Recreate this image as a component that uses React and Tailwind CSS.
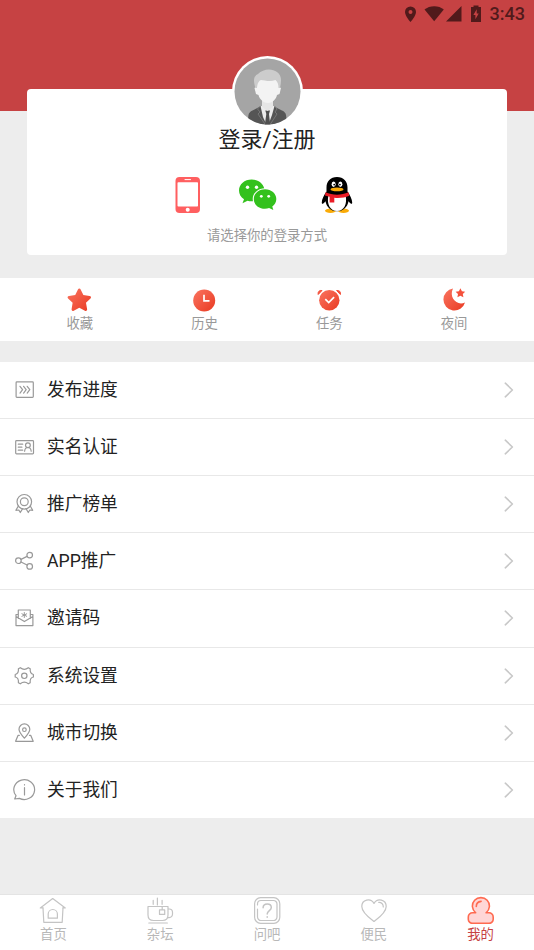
const line = {
  fill: 'none',
  stroke: 'currentColor',
  strokeWidth: 1.2,
  strokeLinecap: 'round',
  strokeLinejoin: 'round',
}

const menu = [
  {
    label: '发布进度',
    icon: (
      <>
        <rect x="4.1" y="3.9" width="17.2" height="15.4" rx="0.8" />
        <path d="M8 8.300l2.600 3.400L8 15.100M11.600 8.300l2.600 3.400-2.600 3.400M15.200 8.300l2.600 3.400-2.600 3.400" />
      </>
    ),
  },
  {
    label: '实名认证',
    icon: (
      <>
        <rect x="3.7" y="5.6" width="17.800" height="13.200" rx="0.8" />
        <path d="M6.300 9.200h4.400M6.300 12.200h3.600M6.300 15.200h4.400M12.600 16.200c.2-2.200 1.500-3.700 3.300-3.700s3.100 1.500 3.300 3.700" />
        <circle cx="15.900" cy="10.200" r="2.400" />
      </>
    ),
  },
  {
    label: '推广榜单',
    icon: (
      <>
        <circle cx="12.300" cy="9.800" r="7.300" />
        <circle cx="12.300" cy="9.800" r="3.900" />
        <path d="M6.200 14.300l-2.300 4 2.900-.3 1.500 2.500 2.300-3.900M18.400 14.300l2.300 4-2.900-.3-1.500 2.500-2.300-3.900" />
      </>
    ),
  },
  {
    label: 'APP推广',
    icon: (
      <>
        <circle cx="6.400" cy="11.700" r="2.800" />
        <circle cx="17.700" cy="6.100" r="2.800" />
        <circle cx="17.700" cy="17.400" r="2.800" />
        <path d="M9 10.400l6.100-3M9 13l6.100 3" />
      </>
    ),
  },
  {
    label: '邀请码',
    icon: (
      <>
        <path d="M6.300 12.500V4h12v8.500M6.300 8.500H4v11.100h16.900V8.500h-2.600M4 10.600l8.400 5 8.500-5" />
        <path d="M12.300 6.500v5M9.900 7.800l4.800 2.500M14.700 7.800l-4.800 2.500" strokeWidth="1" />
      </>
    ),
  },
  {
    label: '系统设置',
    icon: (
      <>
        <path d="M8.300 3.700Q12.300 6.900 16.300 3.700L18.200 4.800Q17.700 9.700 21.400 10.500V13Q17.700 13.800 18.200 18.700L16.300 19.800Q12.300 16.600 8.300 19.800L6.400 18.700Q6.900 13.800 3.200 13V10.500Q6.900 9.700 6.400 4.800Z" />
        <circle cx="12.300" cy="11.800" r="2.700" />
      </>
    ),
  },
  {
    label: '城市切换',
    icon: (
      <>
        <path d="M12.400 17.200C9.300 13.800 7 11.300 7 8.300a5.400 5.400 0 0110.800 0c0 3-2.300 5.500-5.400 8.900z" />
        <circle cx="12.400" cy="8.700" r="1.800" />
        <path d="M7.300 14.400H6L3.600 20.300h17.600l-2.400-5.900h-1.300" />
      </>
    ),
  },
  {
    label: '关于我们',
    icon: (
      <>
        <path d="M4 17.700A10.400 9.900 0 117.400 20.400L2.700 21Z" />
        <path d="M12.500 9.700v7.200M12.500 6.700v.3" />
      </>
    ),
  },
]

const starPath =
  'M12.300 1.500c.6 0 .9.300 1.200.9l2.400 5 5.500.8c1.300.2 1.700 1.300.8 2.200l-4 3.900 1 5.500c.2 1.300-.7 2-1.900 1.400l-5-2.600-4.900 2.600c-1.200.6-2.100-.1-1.900-1.400l.9-5.500-4-3.900c-.9-.9-.5-2 .8-2.200l5.500-.8 2.400-5c.3-.6.7-.9 1.200-.9z'

const shortcuts = [
  { label: '收藏', icon: <path d={starPath} transform="translate(-1.600 -.3) scale(1.130)" fill="url(#coral)" /> },
  {
    label: '历史',
    icon: (
      <>
        <circle cx="12.200" cy="13.500" r="11" fill="url(#coral)" />
        <path d="M12 7.800v6h5.500" fill="none" stroke="#fff" strokeWidth="1.700" />
      </>
    ),
  },
  {
    label: '任务',
    icon: (
      <>
        <path d="M1.200 7.500C.5 5 2.200 3 5 3.500zM23.400 7.500C24.100 5 22.400 3 19.600 3.500z" fill="#f4513c" stroke="#f4513c" strokeLinejoin="round" />
        <circle cx="12.300" cy="13.300" r="10.200" fill="url(#coral)" />
        <path d="M8.300 12.200l3.400 3.300 5.400-5.400" fill="none" stroke="#fff" strokeWidth="1.700" />
      </>
    ),
  },
  {
    label: '夜间',
    icon: (
      <>
        <path d="M11 1.600A11 11 0 1023 15.500C15 19.500 6.500 10.500 11 1.600z" fill="url(#coral)" />
        <path
          d="M18.700 1l1.500 2.900 3.300.5-2.400 2.300.6 3.300-3-1.600-3 1.600.6-3.300-2.400-2.300 3.300-.5z"
          transform="translate(-.3 .3)"
          fill="#f4513c"
        />
      </>
    ),
  },
]

const tabs = [
  {
    label: '首页',
    icon: (
      <>
        <path d="M4.200 11.900H1.300L13.700 2.600l12.600 9.300h-2.600M4 12l.8 14.300h18.400L24 12" />
        <path d="M9.200 22.200v-4.100a4.600 4.600 0 019.200 0v4.100z" />
      </>
    ),
  },
  {
    label: '杂坛',
    icon: (
      <>
        <path d="M7.200 4.300v4M11.400 2v7M16.100 4.300v4M2.800 27h18.600" />
        <path d="M2 10.500h20v8.500q0 5.500-5.500 5.500h-9Q2 24.500 2 19zM22 13h1.200a3.300 3.300 0 013.300 3.300v2a3.300 3.300 0 01-3.300 3.300h-1.700" />
        <path d="M16.200 10.500v3.300M13.500 13.900h5.200v4.500h-5.200z" />
      </>
    ),
  },
  {
    label: '问吧',
    icon: (
      <>
        <rect x="1.600" y="1.700" width="25.200" height="25.600" rx="6" />
        <path d="M4.500 9V8a3.500 3.500 0 013.500-3.500h12.500A3.500 3.500 0 0124 8v13a3.500 3.500 0 01-3.500 3.500H8A3.500 3.500 0 014.500 21v-8" />
        <path d="M10.100 11.800c0-2.400 1.700-3.900 4.200-3.900 2.300 0 4 1.400 4 3.600 0 3.200-4.100 3-4.100 6.500M14.200 20.700v.6" strokeWidth="1.500" />
      </>
    ),
  },
  {
    label: '便民',
    icon: (
      <>
        <path d="M14 25.500C9.500 22 1.800 16.500 1.800 10.400c0-6.900 8.800-9 12.200-3 3.400-6 12.200-3.900 12.200 3 0 6.100-7.700 11.600-12.200 15.100z" />
        <path d="M18.700 6.300c2.700-.2 4.600 1.800 4.600 4.600" />
      </>
    ),
  },
  {
    label: '我的',
    active: true,
    icon: (
      <>
        <path
          d="M8.700 16.800a8.500 8.500 0 1110.400 0H22a4.200 4.200 0 014.200 4.200v2.200a4.200 4.200 0 01-4.200 4.200H5.500a4.200 4.200 0 01-4.200-4.200V21a4.200 4.200 0 014.200-4.200z"
          fill="#ffd6d6"
          strokeWidth="1.600"
        />
        <path d="M9.300 10.500c0-3 1.800-4.800 4.800-5.100" strokeWidth="1.600" />
      </>
    ),
  },
]

function StatusBar() {
  return (
    <div className="flex items-center justify-end pr-[9px] h-[27px] text-[#511a1b]">
      <svg width="80" height="20" viewBox="0 0 80 20" fill="currentColor">
        <path fillRule="evenodd" d="M6.500 2.500a5.500 5.500 0 00-5.500 5.500c0 4 5.500 10 5.500 10s5.500-6 5.500-10a5.500 5.500 0 00-5.500-5.500zm0 3.500a2 2 0 110 4 2 2 0 010-4z" />
        <path d="M20.500 5.500C25.500 1 35 1 39.800 5.500L30.200 17.200z" />
        <path d="M57.500 2v15.500H42z" />
        <path fillRule="evenodd" d="M69.500 1.500h5V3H77v15H67V3h2.500zM72.700 5.300L69.400 11h2v4.300l3.300-5.800h-2z" />
      </svg>
      <span className="ml-[6px] text-[18px] font-medium leading-none">3:43</span>
    </div>
  )
}

function Avatar() {
  return (
    <svg className="block -mt-[33.500px]" width="71" height="71" viewBox="0 0 71 71">
      <defs>
        <clipPath id="face">
          <circle cx="35.500" cy="35.500" r="33" />
        </clipPath>
      </defs>
      <circle cx="35.500" cy="35.500" r="35.500" fill="#fff" />
      <g clipPath="url(#face)">
        <rect width="71" height="71" fill="#a5a5a5" />
        <path d="M15 71l1.500-12q.5-3 4-4.500L29 50h12l9 4.500q3.500 1.500 4 4.500L55.500 71z" fill="#555" />
        <path d="M28.500 50h14l-2.500 9-4.500 12L31 61z" fill="#ececec" />
        <path d="M33.300 54.500h4.700l-1 3.500 1.500 13h-6l1.800-13z" fill="#505050" />
        <path d="M28.500 50l-3 3 2.500 3-2 2 9 13M42.500 50l2.500 3-2 3 2 2-8.500 13" fill="none" stroke="#777" />
        <path d="M30 42h11v8.500L35.500 55 30 50.500z" fill="#e6e6e6" />
        <path d="M24 23h23v8l2 1-1.500 6-2.500 1c-1 4.500-5 8-9 8s-8.500-3.500-9.500-8L24 38l-1.500-6L24 31z" fill="#f3f3f3" />
        <path d="M23.500 32c-2.500-7-2-12 2.500-14 5-5.500 14-6 19-2 5 3.500 4.500 9 3 16h-1.500c0-4-1-6-3-8-5 2-11 .5-14.500 0-3 1.500-3.500 4-4 8z" fill="#ccc" />
      </g>
    </svg>
  )
}

function LoginIcons() {
  return (
    <div className="flex justify-center items-center mt-[20px] h-[44px] pr-[7px]">
      <svg width="26" height="38" viewBox="0 0 26 38">
        <rect x=".5" y="1" width="24.500" height="36" rx="4" fill="#ff5f60" />
        <rect x="2.500" y="6.300" width="20.500" height="24.200" rx=".8" fill="#fff" />
        <path d="M10 3.600h5.500" stroke="#fff" strokeWidth="1" strokeLinecap="round" />
        <circle cx="12.700" cy="33.700" r="2" fill="#fff" />
      </svg>
      <svg className="ml-[37px]" width="40" height="34" viewBox="0 0 40 34">
        <path d="M13.700 1.500C6.500 1.500 1 6.300 1 12.500c0 3.600 1.800 6.700 5 8.700l-1.500 4 5-2.500c1.300.4 2.700.6 4.200.6 7.100 0 12.800-4.500 12.800-10.800S20.800 1.500 13.700 1.500z" fill="#33c11d" />
        <ellipse cx="27" cy="21" rx="12.300" ry="10.700" fill="#fff" />
        <path d="M27 11.200c6.400 0 11.300 4.400 11.300 9.800 0 3-1.500 5.700-4 7.500l1 3.500-4.200-2c-1.300.5-2.600.8-4.100.8-6.300 0-11.200-4.300-11.200-9.800s4.900-9.800 11.200-9.800z" fill="#33c11d" />
        <g fill="#fff">
          <circle cx="9.500" cy="9.200" r="1.700" />
          <circle cx="18.500" cy="9.200" r="1.700" />
          <circle cx="23.300" cy="18.300" r="1.400" />
          <circle cx="30.700" cy="18.300" r="1.400" />
        </g>
      </svg>
      <svg className="ml-[43px]" width="32" height="38" viewBox="0 0 32 38">
        <ellipse cx="9.500" cy="34.800" rx="5.500" ry="2.200" fill="#faab07" />
        <ellipse cx="22.500" cy="34.800" rx="5.500" ry="2.200" fill="#faab07" />
        <path d="M16 1C9.500 1 5.500 5.500 5.500 11.500v4C3 19 .7 23.500.8 26.500c0 2 1 2 3.700-1.300 1 5.500 5 10 11.500 10s10.500-4.500 11.500-10c2.700 3.300 3.700 3.300 3.700 1.300 0-3-2.200-7.500-4.700-11v-4C26.500 5.500 22.500 1 16 1z" fill="#000" />
        <path d="M7.300 20c-1.500 8 1.500 15 8.700 15s10.200-7 8.700-15z" fill="#fff" />
        <path d="M4.500 16.300c7 3.300 16 3.300 23 0l.8 3.500c-4.500 2-10 2.500-15 2v4.800H8.600v-5.800L4 19.500z" fill="#eb1c26" />
        <ellipse cx="12.600" cy="8.300" rx="2" ry="2.700" fill="#fff" />
        <ellipse cx="19.400" cy="8.300" rx="2" ry="2.700" fill="#fff" />
        <circle cx="13.200" cy="8.600" r=".9" />
        <circle cx="18.900" cy="8.600" r=".9" />
        <ellipse cx="16" cy="13.400" rx="6.500" ry="1.900" fill="#faab07" />
      </svg>
    </div>
  )
}

export default function App() {
  return (
    <div className="flex flex-col h-[950px] w-full overflow-hidden bg-[#ededed] font-[Roboto,'Noto_Sans_CJK_SC',sans-serif]">
      <svg className="absolute" width="0" height="0">
        <defs>
          <linearGradient id="coral" x1="0" y1="0" x2="1" y2="1">
            <stop offset="0" stopColor="#fa7460" />
            <stop offset="1" stopColor="#e93a22" />
          </linearGradient>
        </defs>
      </svg>

      <header className="h-[111px] shrink-0 bg-[#c64243]">
        <StatusBar />
      </header>

      <section className="relative -mt-[22px] mx-[27px] h-[166px] shrink-0 rounded bg-white flex flex-col items-center">
        <Avatar />
        <h1 className="text-[22px] leading-[26px] text-[#222]">登录/注册</h1>
        <LoginIcons />
        <p className="mt-[10px] text-[13.350px] leading-[18px] text-[#999]">请选择你的登录方式</p>
      </section>

      <section className="flex shrink-0 mt-[22.500px] h-[63px] px-[17.500px] bg-white">
        {shortcuts.map(s => (
          <div key={s.label} className="flex-1 flex flex-col items-center pt-[9px]">
            <svg width="25" height="25" viewBox="0 0 25 25">{s.icon}</svg>
            <span className="mt-[3px] text-[13.350px] leading-[18px] text-[#999]">{s.label}</span>
          </div>
        ))}
      </section>

      <ul className="shrink-0 mt-[21.350px]">
        {menu.map(m => (
          <li
            key={m.label}
            className="flex items-center h-[57.150px] last:h-[56.200px] pl-3 pr-[20px] bg-white border-b border-[#e8e8e8] last:border-b-0"
          >
            <svg className="text-[#999]" width="24" height="24" viewBox="0 0 24 24" {...line}>{m.icon}</svg>
            <span className="ml-[11px] flex-1 text-[17.700px] leading-6 text-[#222]">{m.label}</span>
            <svg className="text-[#c8c8c8]" width="10" height="16" viewBox="0 0 10 16" {...line} strokeWidth="1.600">
              <path d="M1.300 1.200L8.400 8l-7.100 6.800" />
            </svg>
          </li>
        ))}
      </ul>

      <nav className="mt-auto flex shrink-0 h-[56px] bg-white border-t border-[#e4e4e4]">
        {tabs.map(t => (
          <div key={t.label} className="flex-1 flex flex-col items-center pt-[1px]">
            <svg className={t.active ? 'text-[#ff6a50]' : 'text-[#c4c4c4]'} width="28" height="28" viewBox="0 0 28 28" {...line}>
              {t.icon}
            </svg>
            <span className={`text-[13.350px] leading-[21px] ${t.active ? 'text-[#c64243]' : 'text-[#b8b8b8]'}`}>
              {t.label}
            </span>
          </div>
        ))}
      </nav>
    </div>
  )
}
